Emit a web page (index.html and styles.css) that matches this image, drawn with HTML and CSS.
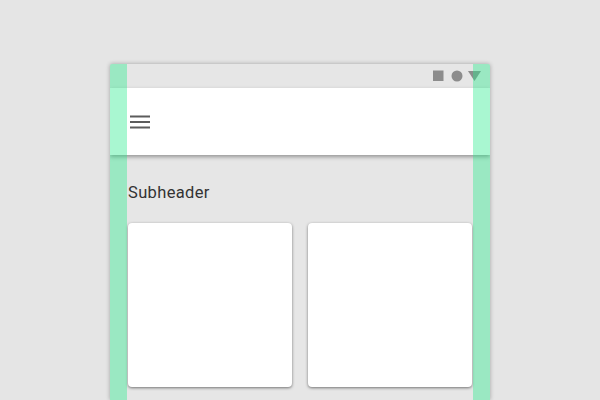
FILE: index.html
```html
<!DOCTYPE html>
<html lang="en">
<head>
<meta charset="utf-8">
<title>Keylines</title>
<link rel="stylesheet" href="styles.css">
</head>
<body>
<div class="device">
  <div class="status">
    <svg class="status-icons" width="48" height="12" viewBox="0 0 48 12">
      <rect x="0" y="0.5" width="10.5" height="10.5" fill="#8c8c8c"/>
      <circle cx="24" cy="6" r="5.5" fill="#8c8c8c"/>
      <path d="M35 1H48L41.5 11Z" fill="#8c8c8c"/>
    </svg>
  </div>
  <header class="appbar">
    <svg class="menu" width="20" height="14" viewBox="0 0 20 14">
      <path d="M0 1.5H20M0 7H20M0 12.5H20" stroke="#5c5c5c" stroke-width="2" fill="none"/>
    </svg>
  </header>
  <main class="content">
    <h2 class="subheader">Subheader</h2>
    <div class="cards">
      <div class="card"></div>
      <div class="card"></div>
    </div>
  </main>
  <div class="keyline keyline-left"></div>
  <div class="keyline keyline-right"></div>
</div>
</body>
</html>
```
FILE: styles.css
```css
html, body {
  margin: 0;
  height: 100%;
  overflow: hidden;
}
body {
  background: #e5e5e5;
  padding: 64px 110px 0;
  box-sizing: border-box;
  font-family: Roboto, "Liberation Sans", sans-serif;
}
.device {
  position: relative;
  width: 380px;
  height: 336px;
  overflow: hidden;
  background: #e6e6e6;
  box-shadow: 0 0 4px rgba(0, 0, 0, 0.3);
  border-radius: 2px 2px 0 0;
}
.status {
  height: 24px;
  display: flex;
  justify-content: flex-end;
  align-items: center;
  padding-right: 9px;
}
.status-icons {
  display: block;
}
.appbar {
  position: relative;
  height: 67px;
  background: #fff;
  display: flex;
  align-items: center;
  padding-left: 20px;
  box-shadow: 0 2px 4px rgba(0, 0, 0, 0.35);
}
.menu {
  display: block;
}
.content {
  padding: 28px 18px 0 18px;
}
.subheader {
  margin: 0 0 20px;
  font-size: 16.5px;
  line-height: 20px;
  font-weight: 400;
  letter-spacing: 0.35px;
  color: #333;
}
.cards {
  display: flex;
  gap: 16px;
}
.card {
  flex: 1;
  height: 164px;
  background: #fff;
  border-radius: 4px;
  box-shadow: 0 1px 3px rgba(0, 0, 0, 0.5);
}
.keyline {
  position: absolute;
  top: 0;
  bottom: 0;
  width: 17px;
  background: rgba(40, 235, 140, 0.4);
}
.keyline-left { left: 0; }
.keyline-right { right: 0; }
```
